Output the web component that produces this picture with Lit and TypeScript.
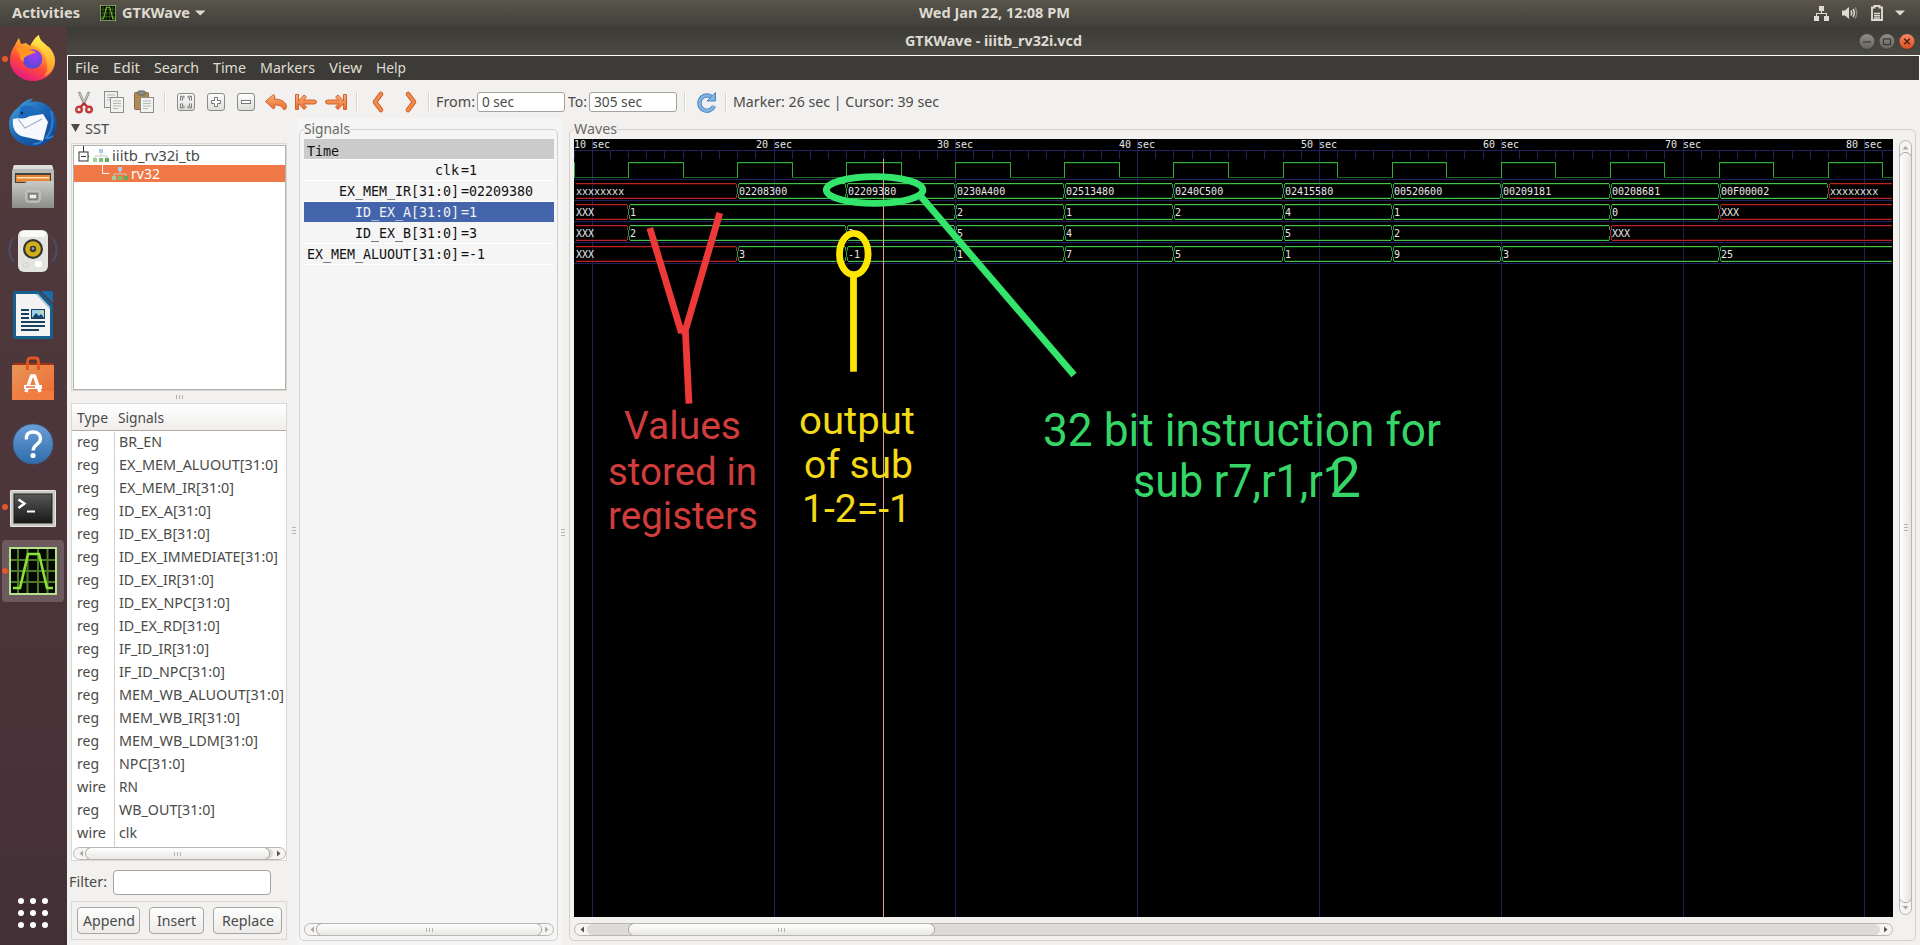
import { LitElement, html, svg, css } from "lit";
import { customElement } from "lit/decorators.js";
import { classMap } from "lit/directives/class-map.js";

/* A run of interface text with a known advance width. */
const label = (text: string, width: number, cls = "") => html`
  <svg class="label ${cls}" width=${width} height="20">
    <text x="0" y="15" textLength=${width} lengthAdjust="spacingAndGlyphs">${text}</text>
  </svg>`;

const labelStyles = css`
  .label { display: block; flex: none; overflow: visible; font: 14.3px "Noto Sans", "Open Sans", sans-serif; fill: #4a4a48; }
  .label.light { fill: #dfdbd2; }
  .label.bold { font-weight: 700; font-size: 14px; fill: #dfdbd2; }
  .label.white { fill: #fff; }
  .label.soft { fill: #6a6864; }
`;

/* ---------- launcher ---------- */
const gtkwaveGlyph = svg`
  <rect x="0" y="0" width="48" height="48" fill="#b5e08c"/>
  <rect x="2" y="2" width="44" height="44" fill="#050805"/>
  <path d="M9 2v44M18.500 2v44M29 2v44M38.500 2v44M2 13h44M2 24h44M2 35h44" stroke="#4c7a26" stroke-width="2"/>
  <path d="M4 41h7L19 7h11l8 34h6" fill="none" stroke="#8be234" stroke-width="2.600"/>`;

const dockIcons = [
  { run: true, art: svg`
    <defs>
      <linearGradient id="fa" x1=".8" y1="0" x2=".3" y2="1"><stop offset="0" stop-color="#fff44f"/><stop offset=".35" stop-color="#ffa229"/><stop offset=".65" stop-color="#ff4a3c"/><stop offset="1" stop-color="#e31587"/></linearGradient>
      <radialGradient id="fb" cx=".6" cy=".3" r=".8"><stop offset="0" stop-color="#a03cf5"/><stop offset="1" stop-color="#4a4bd0"/></radialGradient>
      <linearGradient id="fc" x1="0" y1="0" x2="0" y2="1"><stop offset="0" stop-color="#fff44f"/><stop offset="1" stop-color="#ff9a2a"/></linearGradient>
    </defs>
    <path d="M6 10C8 6 9 4 10 3l2 6 5-1 4 3c2-4 5-8 9-11 0 5 4 7 8 11l2 1c4 4 6 9 6 14 0 12-10 20-22 20S1 37 1 25c0-6 2-11 5-15z" fill="url(#fa)"/>
    <path d="M22 10c2-4 4-8 8-10 0 5 4 7 8 11s8 9 8 15c-1 10-7 14-11 15 4-5 4-9 2-17-2-7-8-13-15-14z" fill="url(#fc)" opacity=".85"/>
    <circle cx="23.500" cy="24" r="9.800" fill="url(#fb)"/>
    <path d="M7 13c6-2 9 0 12 2 4 0 7 1 8 3-4 0-6 2-9 3-2 1-4 2-3 6-4-2-5-5-4-8-1-2-3-3-4-6z" fill="#ff9422"/>` },
  { run: false, art: svg`
    <defs><linearGradient id="ta" x1="0" y1="0" x2="1" y2="1"><stop offset="0" stop-color="#45a7e6"/><stop offset=".5" stop-color="#1a63b4"/><stop offset="1" stop-color="#0f3f85"/></linearGradient></defs>
    <path d="M10 8C14 2 22-1 24 0l-3 3c10-2 18 2 22 8 6 8 6 20 1 27-5 7-14 10-20 9C11 47 0 38 0 25 0 17 5 11 10 8z" fill="url(#ta)"/>
    <path d="M4 20l30-5 5 8-5 19-22-5C6 34 3 29 4 20z" fill="#f6f8fb"/>
    <path d="M9 20l7 9 17-9" fill="none" stroke="#9fb1c8" stroke-width="1.200"/>
    <path d="M12 8c8-3 14 0 17 5l-8 3c-3 4-8 4-12 3z" fill="#1d6bbd"/><circle cx="13" cy="14" r="1.300" fill="#0b2550"/>
    <path d="M42 12c3 10 1 20-5 27 2 1 4 0 7-2M33 42c-2 2-5 3-9 3" fill="none" stroke="#2f7fd0" stroke-width="2"/>` },
  { run: false, art: svg`
    <defs><linearGradient id="na" x1="0" y1="0" x2="0" y2="1"><stop offset="0" stop-color="#c9c9c7"/><stop offset="1" stop-color="#8c8c89"/></linearGradient></defs>
    <path d="M5 2h38l2 6v36H3V8z" fill="#b9b9b6"/><path d="M5 2h38l1 4H4z" fill="#dededc"/>
    <rect x="6" y="10" width="36" height="10" fill="#453f3c"/><rect x="7" y="12" width="34" height="7" fill="#e48436"/><rect x="8" y="14" width="32" height="1.500" fill="#ffe2b0"/>
    <path d="M3 20h13l2-2h27v27H3z" fill="url(#na)"/>
    <rect x="17" y="28" width="14" height="11" rx="2" fill="#a6a6a3" stroke="#d3d3d0"/><rect x="20" y="31" width="8" height="5" fill="#eee" stroke="#555"/>` },
  { run: false, art: svg`
    <path d="M6 9Q-4 22 6 36M3 12q-6 10 0 22M42 9q10 13 0 27M45 12q6 10 0 22" fill="none" stroke="#4c5579" stroke-width="1.200" opacity=".7"/>
    <rect x="9" y="3" width="30" height="42" rx="6" fill="#e3e3e0"/><rect x="11" y="4" width="26" height="6" rx="3" fill="#fafafa"/>
    <circle cx="24" cy="22" r="10" fill="#343434"/><circle cx="24" cy="22" r="7.800" fill="#d2ae18"/><circle cx="24" cy="22" r="3.200" fill="#3b3b3b"/><circle cx="24" cy="21.500" r="1.300" fill="#aaa"/>
    <rect x="26" y="34" width="7" height="6" rx="2.500" fill="#fff"/><rect x="14" y="36" width="5" height="4" rx="1" fill="none" stroke="#d2d2cf"/>` },
  { run: false, art: svg`
    <path d="M6 0h24l14 14v32a2 2 0 0 1-2 2H6a2 2 0 0 1-2-2V2a2 2 0 0 1 2-2z" fill="#15608f"/><path d="M32 0h10a2 2 0 0 1 2 2v10z" fill="#1a6ca8"/>
    <path d="M7 3h20l14 15v27H7z" fill="#f3f3f3"/><path d="M28 3l13 14" stroke="#b8cbd8" stroke-width="1.500"/>
    <path d="M12 19h8M12 23h8M12 27h8M12 31h24M12 35h24M12 39h18" stroke="#17435f" stroke-width="2"/>
    <rect x="22.500" y="18.500" width="13" height="9" fill="#9cd0ef" stroke="#17435f"/><path d="M23 27l4-5 3 3 2-2 3 4z" fill="#17435f"/><circle cx="33" cy="21" r="1.500" fill="#efdb5a"/>` },
  { run: false, art: svg`
    <defs><linearGradient id="sa" x1="0" y1="0" x2="1" y2="1"><stop offset="0" stop-color="#e8965a"/><stop offset="1" stop-color="#ee6a30"/></linearGradient></defs>
    <path d="M4 8h40v4H4z" fill="#9c3512"/><rect x="3" y="10" width="42" height="35" fill="url(#sa)"/><rect x="3" y="36" width="42" height="9" fill="#f37f45" opacity=".8"/>
    <path d="M18.500 15V7q0-4 3-4h5q3 0 3 4v8" fill="none" stroke="#e2561f" stroke-width="2.800"/>
    <path d="M17 37l5.500-16h3L31 37" fill="none" stroke="#fff" stroke-width="3.400"/><path d="M15 32h18" stroke="#fff" stroke-width="4"/><path d="M17 32h9" stroke="#ef7a3f" stroke-width="1.600"/>` },
  { run: false, art: svg`
    <defs><linearGradient id="ha" x1="0" y1="0" x2="0" y2="1"><stop offset="0" stop-color="#6ba0d8"/><stop offset="1" stop-color="#2d6cab"/></linearGradient></defs>
    <circle cx="24" cy="25" r="20" fill="url(#ha)" stroke="#3a5f8c" stroke-width=".8"/>
    <path d="M17.500 20.500c-1-6 3-7.500 6.500-7.500 5 0 7.500 3 7.500 6.500 0 6-7.300 5.500-7.300 12" fill="none" stroke="#fff" stroke-width="3.400"/><circle cx="24" cy="36.500" r="2.600" fill="#fff"/>` },
  { run: true, art: svg`
    <defs><linearGradient id="ra" x1="0" y1="0" x2="0" y2="1"><stop offset="0" stop-color="#585858"/><stop offset="1" stop-color="#181818"/></linearGradient></defs>
    <rect x="1" y="7" width="46" height="37" rx="1.500" fill="#c9c9c6"/><rect x="1.500" y="7.500" width="45" height="36" rx="1" fill="none" stroke="#e8e8e6"/>
    <rect x="5" y="11" width="38" height="29" fill="url(#ra)" stroke="#222"/>
    <path d="M9.500 16.500l6 4-6 4.500" fill="none" stroke="#fff" stroke-width="2.400"/><path d="M18 28.500h8" stroke="#fff" stroke-width="2"/>` },
  { run: true, active: true, art: gtkwaveGlyph },
];

@customElement("app-dock")
class AppDock extends LitElement {
  static styles = css`
    :host { display: flex; flex-direction: column; box-sizing: border-box; padding: 1px 3px 0 0; background: linear-gradient(#523a3b, #4c363b 50%, #433036); }
    .slot { height: 62px; margin: 0 0 2px 2px; width: 62px; display: flex; align-items: center; border-radius: 4px; }
    .slot.active { background: #6c5a5e; }
    .pip { width: 6px; height: 6px; border-radius: 3px; margin-right: 1px; }
    .pip.on { background: #e4572c; }
    .slot svg { display: block; overflow: visible; }
    .apps { display: grid; grid-template-columns: repeat(3, 6px); gap: 6px; margin: auto 0 17px 18px; }
    .apps i { width: 6px; height: 6px; border-radius: 3px; background: #fff; }
  `;
  render() {
    return html`
      ${dockIcons.map((d) => html`
        <div class=${classMap({ slot: true, active: !!(d as any).active })}>
          <div class=${classMap({ pip: true, on: d.run })}></div>
          <svg width="48" height="48" viewBox="0 0 48 48">${d.art}</svg>
        </div>`)}
      <div class="apps">${Array.from({ length: 9 }, () => html`<i></i>`)}</div>`;
  }
}

/* ---------- waveform canvas ---------- */
type Change = [number, string, boolean?];
const START = 8.950;
const px = (t: number) => (t <= START ? 574 : Math.min(1893, Math.floor(592.2 + (t - 10) * 18.180)));

const buses: Change[][] = [
  [[START, "xxxxxxxx", true], [18, "02208300"], [24, "02209380"], [30, "0230A400"], [36, "02513480"], [42, "0240C500"], [48, "02415580"], [54, "00520600"], [60, "00209181"], [66, "00208681"], [72, "00F00002"], [78, "xxxxxxxx", true]],
  [[START, "XXX", true], [12, "1"], [30, "2"], [36, "1"], [42, "2"], [48, "4"], [54, "1"], [66, "0"], [72, "XXX", true]],
  [[START, "XXX", true], [12, "2"], [24, "3"], [30, "5"], [36, "4"], [48, "5"], [54, "2"], [66, "XXX", true]],
  [[START, "XXX", true], [18, "3"], [24, "-1"], [30, "1"], [36, "7"], [42, "5"], [48, "1"], [54, "9"], [60, "3"], [72, "25"]],
];

@customElement("wave-view")
class WaveView extends LitElement {
  static styles = css`
    :host { display: block; background: #000; }
    svg { display: block; }
    .crisp { shape-rendering: crispEdges; fill: none; stroke-width: 1; }
    .grid { stroke: #20205f; }
    .hi { stroke: #35a83c; }
    .lo { stroke: #1c6a22; }
    .bus { stroke: #4cbf52; }
    .side { stroke: #2f9a38; }
    .bad { stroke: #b52626; }
    .glow { stroke: #002c00; }
    .badglow { stroke: #3c0000; }
    .mark { stroke: #e79a8c; }
    .txt { font: 10px "DejaVu Sans Mono", monospace; fill: #e8e8e8; }
    .note { font-family: Roboto, sans-serif; }
    .red { fill: #cf3c3b; }
    .yellow { fill: #f2da18; }
    .green { fill: #35d568; }
    .pen { fill: none; stroke-width: 6.800; }
    .pen.r { stroke: #ee3939; }
    .pen.y { stroke: #ffe600; }
    .pen.g { stroke: #33e56b; }
  `;

  private clock() {
    const out = [svg`<path class="crisp hi" d="M574.500 162V178"/>`];
    for (let t = 9; t < 82; t += 6) {
      const a = t === 9 ? 574 : px(t), b = px(t + 3), c = px(t + 6);
      out.push(svg`<path class="crisp lo" d="M${a} 177.500H${b}"/>`);
      if (t + 3 < 81) out.push(svg`
        <path class="crisp glow" d="M${b} 163.500H${c}"/>
        <path class="crisp hi" d="M${b + 0.500} 178V162.500H${c + 0.500}V178"/>`);
    }
    return out;
  }

  private bus(row: Change[], index: number) {
    const y = 183 + index * 21;
    return row.map(([t, value, bad], i) => {
      const a = px(t), last = i === row.length - 1;
      const b = last ? 1892 : px(row[i + 1][0]);
      const left = a + 1;
      const right = last ? b : b - 1;
      return svg`
        <path class="crisp ${bad ? "badglow" : "glow"}" d="M${left + 1} ${y + 1.500}H${right}M${left + 1} ${y + 14.500}H${right}"/>
        <path class="crisp ${bad ? "bad" : "bus"}" d="M${left + 1} ${y + 0.500}H${right}M${left + 1} ${y + 15.500}H${right}"/>
        ${i ? svg`<path class="crisp ${bad ? "bad" : "side"}" d="M${a + 1.500} ${y + 1}V${y + 5}M${a + 1.500} ${y + 11}V${y + 15}M${a + 0.500} ${y + 5}V${y + 11}"/>` : ""}
        ${last ? "" : svg`<path class="crisp ${bad ? "bad" : "side"}" d="M${b - 0.500} ${y + 1}V${y + 5}M${b - 0.500} ${y + 11}V${y + 15}M${b + 0.500} ${y + 5}V${y + 11}"/>`}
        <text class="txt" x=${a + 2} y=${y + 12}>${value}</text>`;
    });
  }

  private note(text: string, x: number, y: number, width: number, size: number, tone: string) {
    return svg`<text class="note ${tone}" x=${x} y=${y} font-size=${size} textLength=${width} lengthAdjust="spacingAndGlyphs">${text}</text>`;
  }

  render() {
    const secs = Array.from({ length: 73 }, (_, i) => i + 9);
    return html`
      <svg width="1319" height="778" viewBox="574 139 1319 778">
        <path class="crisp grid" d="M574 150.500H1893M574 179.500H1893M574 200.500H1893M574 221.500H1893M574 242.500H1893M574 263.500H1893"/>
        ${secs.map((t) => svg`<path class="crisp grid" d="M${px(t) + 0.500} ${t % 10 ? "150V159" : "139V917"}"/>`)}
        ${[10, 20, 30, 40, 50, 60, 70, 80].map((t) => svg`<text class="txt" x=${px(t) - 18} y="148">${t} sec</text>`)}
        ${this.clock()}
        ${buses.map((b, i) => this.bus(b, i))}
        <path class="crisp mark" d="M883.500 159V917"/>
        <ellipse class="pen g" cx="874.600" cy="190" rx="48.300" ry="13.400"/>
        <path class="pen g" d="M920.500 196L1074 375"/>
        <ellipse class="pen y" cx="853.800" cy="254" rx="14.300" ry="20.600"/>
        <path class="pen y" d="M853.500 275V371.700"/>
        <path class="pen r" d="M649.800 228L681.500 333M719.800 213L684 335M685.400 331L689 403.700"/>
        ${this.note("Values", 624, 439.200, 117, 39, "red")}
        ${this.note("stored in", 608, 484.500, 149, 39, "red")}
        ${this.note("registers", 608, 528.500, 150, 39, "red")}
        ${this.note("output", 799, 434.200, 116, 39, "yellow")}
        ${this.note("of sub", 804, 478.200, 109, 39, "yellow")}
        ${this.note("1-2=-1", 802, 522.200, 109, 39, "yellow")}
        ${this.note("32 bit instruction for", 1043, 445.500, 398, 45.500, "green")}
        ${this.note("sub r7,r1,r1", 1133, 497.200, 214, 45.500, "green")}
        ${this.note("2", 1329, 497.200, 32, 55, "green")}
      </svg>`;
  }
}

/* ---------- main window ---------- */
const tools: Record<string, unknown> = {
  cut: svg`<path d="M7 2l6 13M17 2l-6 13" stroke="#8d8d8a" stroke-width="2.600"/><path d="M7.500 3l5.500 11M16.500 3l-5.500 11" stroke="#d8d8d5" stroke-width="1"/><circle cx="7" cy="19.500" r="2.800" fill="none" stroke="#c03a3a" stroke-width="2.400"/><circle cx="17" cy="19.500" r="2.800" fill="none" stroke="#c03a3a" stroke-width="2.400"/><path d="M9 16.500l3-3 3 3" fill="none" stroke="#b43030" stroke-width="2.400"/>`,
  copy: svg`<rect x="2.500" y="1.500" width="13" height="16" fill="#eee" stroke="#8d8d8a"/><path d="M5 5h8M5 7.500h8M5 10h6" stroke="#b5b5b2"/><rect x="8.500" y="7.500" width="13" height="15" fill="#f2f2f1" stroke="#8d8d8a"/><path d="M11 11h8M11 13.500h8M11 16h8M11 18.500h5" stroke="#b5b5b2"/>`,
  paste: svg`<rect x="2.500" y="2.500" width="14" height="17" rx="1" fill="#b08a55" stroke="#8a6a3c"/><rect x="6" y="1" width="7" height="4" rx="1" fill="#8d8d8a" stroke="#666"/><rect x="8.500" y="7.500" width="13" height="15" fill="#f2f2f1" stroke="#8d8d8a"/><path d="M11 11h8M11 13.500h8M11 16h8M11 18.500h5" stroke="#b5b5b2"/>`,
  fit: svg`<rect x="3.500" y="3.500" width="17" height="17" rx="2.500" fill="url(#box)" stroke="#8a8a87"/><path d="M10.500 7H7.500v3.500M13.500 7h3v3.500M10.500 17H7.500v-3.500M13.500 17h3v-3.500" fill="none" stroke="#666" stroke-width="2.600"/><path d="M10.500 7H7.500v3.500M13.500 7h3v3.500M10.500 17H7.500v-3.500M13.500 17h3v-3.500" fill="none" stroke="#fff" stroke-width=".8"/>`,
  plus: svg`<rect x="3.500" y="3.500" width="17" height="17" rx="2.500" fill="url(#box)" stroke="#8a8a87"/><path d="M10.500 7.500h3v3h3v3h-3v3h-3v-3h-3v-3h3z" fill="#fff" stroke="#777"/>`,
  minus: svg`<rect x="3.500" y="3.500" width="17" height="17" rx="2.500" fill="url(#box)" stroke="#8a8a87"/><rect x="7.500" y="10.500" width="9" height="3" fill="#fff" stroke="#777"/>`,
  undo: svg`<path d="M1.500 11.500L9.500 4.500l1.500 1.500-1 3c7 0 11 2.500 12.300 6.500.7 2.500-.8 4.500-2.800 4-1.500-3.500-4-4.500-9.500-4.500l1 2.500L9.500 19z" fill="url(#org)" stroke="#d2602a" stroke-linejoin="round"/>`,
  first: svg`<path d="M1.500 4.500h3v6.500L10 5l2.500 2-3 3H20q2.500 0 2.500 2t-2.500 2H9.500l3 3L10 19.500 4.500 13.500v6h-3z" fill="url(#org)" stroke="#d2602a" stroke-linejoin="round"/>`,
  last: svg`<path d="M22.500 4.500h-3v6.500L14 5l-2.500 2 3 3H4q-2.500 0-2.500 2t2.500 2h10.500l-3 3 2.500 2.500 5.500-6v6h3z" fill="url(#org)" stroke="#d2602a" stroke-linejoin="round"/>`,
  left: svg`<path d="M15 4l-6 8 6 8" fill="none" stroke="#d2602a" stroke-width="4.600" stroke-linecap="round" stroke-linejoin="round"/><path d="M15 4l-6 8 6 8" fill="none" stroke="#f08c4c" stroke-width="2.800" stroke-linecap="round" stroke-linejoin="round"/>`,
  right: svg`<path d="M9 4l6 8-6 8" fill="none" stroke="#d2602a" stroke-width="4.600" stroke-linecap="round" stroke-linejoin="round"/><path d="M9 4l6 8-6 8" fill="none" stroke="#f08c4c" stroke-width="2.800" stroke-linecap="round" stroke-linejoin="round"/>`,
  reload: svg`<path d="M17.500 7A7.600 7.600 0 1 0 20 16" fill="none" stroke="#4f86c0" stroke-width="4.400"/><path d="M17.500 7A7.600 7.600 0 1 0 20 16" fill="none" stroke="#85b3e0" stroke-width="2.400"/><path d="M21.500 2.500v8.500h-8.500l3-3 2.500-2.500z" fill="#85b3e0" stroke="#4f86c0"/>`,
};
const defs = svg`<defs>
  <linearGradient id="box" x1="0" y1="0" x2="0" y2="1"><stop offset="0" stop-color="#fff"/><stop offset="1" stop-color="#dcdcda"/></linearGradient>
  <linearGradient id="org" x1="0" y1="0" x2="0" y2="1"><stop offset="0" stop-color="#f9b27c"/><stop offset="1" stop-color="#ea6c2c"/></linearGradient></defs>`;
const tool = (name: string, cls = "") => html`<div class="tool ${cls}"><svg width="24" height="24">${defs}${tools[name]}</svg></div>`;

const treeGlyph = html`<svg class="tree-glyph" width="16" height="14"><path d="M8 4v3M2 9V7h12v2" fill="none" stroke="#c3cac3" stroke-width="1"/><rect x="6" y="0" width="4" height="4" fill="#a9cdf2"/><rect x="0" y="9" width="4" height="4" fill="#9fce98"/><rect x="6" y="9" width="4" height="4" fill="#7cbf73"/><rect x="12" y="9" width="4" height="4" fill="#5fae55"/></svg>`;

const menu: [string, number][] = [["File", 24], ["Edit", 27], ["Search", 45], ["Time", 33], ["Markers", 55], ["View", 33], ["Help", 30]];

const signals: [string, string, number][] = [
  ["reg", "BR_EN", 43], ["reg", "EX_MEM_ALUOUT[31:0]", 159], ["reg", "EX_MEM_IR[31:0]", 115], ["reg", "ID_EX_A[31:0]", 92],
  ["reg", "ID_EX_B[31:0]", 91], ["reg", "ID_EX_IMMEDIATE[31:0]", 159], ["reg", "ID_EX_IR[31:0]", 95], ["reg", "ID_EX_NPC[31:0]", 111],
  ["reg", "ID_EX_RD[31:0]", 101], ["reg", "IF_ID_IR[31:0]", 90], ["reg", "IF_ID_NPC[31:0]", 106], ["reg", "MEM_WB_ALUOUT[31:0]", 165],
  ["reg", "MEM_WB_IR[31:0]", 121], ["reg", "MEM_WB_LDM[31:0]", 139], ["reg", "NPC[31:0]", 66], ["wire", "RN", 19],
  ["reg", "WB_OUT[31:0]", 96], ["wire", "clk", 18],
];

const traces: [string, string, boolean?][] = [
  ["clk", "1"], ["EX_MEM_IR[31:0]", "02209380"], ["ID_EX_A[31:0]", "1", true], ["ID_EX_B[31:0]", "3"], ["EX_MEM_ALUOUT[31:0]", "-1"],
];

const hbar = (cls: string, offLeft = false, offRight = false) => html`
  <div class="hbar ${cls}">
    <svg width="13" height="11"><path d="M9 2.500v6L5.500 5.500z" fill=${offLeft ? "#a9a8a5" : "#55534f"}/></svg>
    <div class="trough"><div class="thumb"><i></i><i></i><i></i></div></div>
    <svg width="13" height="11"><path d="M5 2.500v6L8.500 5.500z" fill=${offRight ? "#a9a8a5" : "#55534f"}/></svg>
  </div>`;

@customElement("app-root")
class AppRoot extends LitElement {
  static styles = [labelStyles, css`
    :host { display: grid; width: 1920px; height: 945px; overflow: hidden; grid-template: 27px 918px / 67px 1853px; background: #f2f1ef; }
    svg { display: block; flex: none; }
    .topbar { grid-column: 1 / 3; display: grid; grid-template-columns: 1fr auto 1fr; align-items: center; background: linear-gradient(#59554b, #403f3a); padding-bottom: 1px; }
    .topbar > div { display: flex; align-items: center; }
    .top-left { padding-left: 12px; }
    .top-left .app { margin: 0 6px 0 20px; }
    .top-left .caret { margin-left: 5px; }
    .top-mid { padding-left: 68px; width: 151px; }
    .top-right { justify-content: flex-end; padding-right: 15px; gap: 13px; }
    .top-right .battery { margin-right: -1px; }
    .window { display: grid; grid-template-rows: 28px 25px 38px 827px; min-width: 0; }
    .title { display: flex; align-items: center; background: linear-gradient(#3b3a35, #4a4943); padding: 0 5px 0 838px; }
    .buttons { display: flex; gap: 4px; margin-left: auto; }
    .menubar { display: flex; align-items: center; gap: 14px; padding-left: 7px; background: #3c3b37; border: 1px solid #fbfbfa; border-bottom: 0; }
    .toolbar { display: flex; align-items: center; padding: 5px 0 0 2px; }
    .tool { width: 30px; display: flex; justify-content: center; }
    .tool.wide { width: 33px; }
    .sep { width: 1px; height: 19px; background: #d5d3d0; border-right: 1px solid #fff; }
    .s1 { margin: 0 5px 0 5px; }
    .s2 { margin: 0 3px 0 5px; }
    .s3 { margin: 0 6px 0 1px; }
    .s4 { margin: 0 5px 0 7px; }
    .s5 { margin: 0 6px 0 4px; }
    .s4 + .tool { width: 30px; }
    .entry { box-sizing: border-box; height: 20px; border: 1px solid #a5a29d; border-radius: 3px; background: #fff; display: flex; align-items: center; padding-left: 4px; }
    .entry.from { width: 88px; margin: 0 3px 0 2px; }
    .entry.to { width: 88px; margin-left: 2px; }
    .body { display: grid; grid-template-columns: 230px 264px 1359px; }
    .left { display: grid; grid-template-rows: 25px 248px 12px 458px 40px 39px; grid-template-columns: 225px 5px; }
    .left > * { grid-column: 1; }
    .sst { display: flex; align-items: center; gap: 5px; padding: 0 0 4px 4px; }
    .box { margin-left: 4px; width: 216px; box-sizing: border-box; border: 1px solid #dad8d4; background: #fff; }
    .tree { background: #f2f1ef; padding: 1px 0 0 1px; }
    .tree-in { box-sizing: border-box; height: 100%; border: 1px solid #b3b0ac; background: #fff; }
    .row1 { display: flex; align-items: center; height: 19px; padding-left: 4px; }
    .row1 .tree-glyph { margin: 0 3px 0 4px; }
    .row2 { display: flex; align-items: center; height: 17px; padding-left: 28px; background: #f07746; }
    .row2 .tree-glyph { margin: 0 3px 0 2px; }
    .grip { display: flex; justify-content: center; align-items: center; gap: 2px; }
    .grip i, .thumb i { width: 1px; height: 4px; background: #b4b2ae; }
    .vgrip { grid-column: 2 !important; grid-row: 1 / 7; display: flex; flex-direction: column; justify-content: center; gap: 2px; align-items: flex-start; padding-top: 2px; }
    .vgrip i { width: 4px; height: 1px; background: #bbb9b5; }
    .list { display: grid; grid-template-rows: 26px 416px 13px; padding: 1px 0 0; }
    .head { display: flex; align-items: center; background: linear-gradient(#fff, #efeeec); border-bottom: 1px solid #b0ada9; padding: 1px 0 0 5px; box-sizing: border-box; }
    .head .label + .label { margin-left: 10px; }
    .rows { background: linear-gradient(90deg, transparent 42px, #d2d0cd 42px, #d2d0cd 43px, transparent 43px); margin-top: -1px; }
    .sig { display: grid; grid-template-columns: 42px 1fr; height: 23px; align-items: center; padding-left: 5px; }
    .hbar { display: grid; grid-template-columns: 13px 1fr 13px; box-sizing: border-box; height: 13px; border: 1px solid #b9b6b2; border-radius: 7px; background: #f6f5f4; overflow: hidden; }
    .trough { background: #dcdbd8; margin: 0 -1px; border-radius: 6px; display: flex; }
    .thumb { display: flex; justify-content: center; align-items: center; gap: 2px; box-sizing: border-box; background: linear-gradient(#fefefe, #e9e8e6); border-radius: 7px; box-shadow: 0 0 0 1px #a3a09c; }
    .hbar.a { margin: 0 0 0 1px; }
    .hbar.a .thumb { width: 183px; }
    .hbar.b { width: 250px; margin-top: 6px; }
    .hbar.b .thumb { width: 100%; }
    .hbar.c { width: 1319px; margin-top: 6px; }
    .hbar.c .thumb { width: 305px; margin-left: 42px; }
    .filter { display: flex; align-items: center; padding: 2px 0 0 2px; gap: 6px; }
    .field { box-sizing: border-box; width: 158px; height: 25px; border: 1px solid #a5a29d; border-radius: 4px; background: #fff; }
    .actions { background: none; display: flex; align-items: center; gap: 9px; padding-left: 5px; }
    .btn { box-sizing: border-box; height: 27px; border: 1px solid #a9a6a2; border-radius: 4px; background: linear-gradient(#fdfdfd, #ecebe9); display: flex; align-items: center; justify-content: center; }
    .btn.w1 { width: 63px; }
    .btn.w2 { width: 55px; }
    .btn.w3 { width: 69px; }
    fieldset { box-sizing: border-box; margin: 1px 0 0; height: 822px; min-width: 0; border: 1px solid #d3d1ce; border-radius: 5px; }
    legend { padding: 0; height: 20px; }
    .panel { background: #f5f5f5; }
    .panel fieldset { width: 259px; margin-left: 2px; padding: 0 3px 0 4px; }
    .names { height: 778px; font: 13.330px/20px "DejaVu Sans Mono", monospace; color: #111; letter-spacing: -0.020px; }
    .time { height: 17px; background: #cbcbcb; padding: 3px 0 0 3px; line-height: 20px; border-bottom: 1px solid #fff; }
    .trace { display: grid; grid-template-columns: 155px 1fr; gap: 2px; height: 20px; border-bottom: 1px solid #fff; line-height: 21px; white-space: pre; text-align: right; }
    .trace span + span { text-align: left; }
    .trace.on { background: #4464ac; color: #f2f2f5; border-color: #f5f5f5; }
    .waves { display: grid; grid-template-columns: 8px 1347px; }
    .waves > .vgrip { grid-column: 1 !important; grid-row: 1; }
    .waves fieldset { padding: 0 3px 0 4px; }
    .canvas { display: grid; grid-template: 778px 19px / 1319px 13px; column-gap: 6px; }
    .vbar { box-sizing: border-box; height: 775px; margin-top: 1px; border: 1px solid #b9b6b2; border-radius: 7px; background: #f6f5f4; display: grid; grid-template-rows: 12px 1fr 12px; overflow: hidden; }
    .vthumb { display: flex; flex-direction: column; justify-content: center; align-items: center; gap: 2px; background: linear-gradient(90deg, #fefefe, #e6e5e3); border-radius: 6px; box-shadow: 0 0 0 1px #a3a09c; }
    .vthumb i { width: 4px; height: 1px; background: #b4b2ae; }
  `];

  private winButton(glyph: unknown, hot = false) {
    const id = hot ? "btn-hot" : "btn-plain";
    return html`<svg width="16" height="17"><defs>
      <linearGradient id=${id} x1="0" y1="0" x2="0" y2="1"><stop offset="0" stop-color=${hot ? "#f58a66" : "#908e87"}/><stop offset="1" stop-color=${hot ? "#dc4c1e" : "#65635c"}/></linearGradient></defs>
      <circle cx="8" cy="8.500" r="7.800" fill="url(#${id})" stroke="#33322e" stroke-width=".5"/>${glyph}</svg>`;
  }

  render() {
    return html`
      <div class="topbar">
        <div class="top-left">
          ${label("Activities", 68, "bold")}
          <svg class="app" width="16" height="16" viewBox="0 0 48 48">${gtkwaveGlyph}</svg>
          ${label("GTKWave", 68, "bold")}
          <svg class="caret" width="11" height="6"><path d="M0 .500h10.500L5.200 5.500z" fill="#dfdbd2"/></svg>
        </div>
        <div class="top-mid">${label("Wed Jan 22, 12:08 PM", 151, "bold")}</div>
        <div class="top-right">
          <svg width="15" height="16" fill="#dfdbd2"><rect x="5" y="1" width="5" height="5"/><rect x="0" y="11" width="5" height="5"/><rect x="10" y="11" width="5" height="5"/><path d="M7 6h1v2h5v3h-1V9H3v2H2V8h5z"/></svg>
          <svg width="16" height="14"><path d="M0 4.500h3L7 1v12L3 9.500H0z" fill="#dfdbd2"/><path d="M9 4.500q1.500 2.500 0 5M11 3q2.600 4 0 8" fill="none" stroke="#dfdbd2" stroke-width="1.500"/><path d="M13 1.500q3.500 5.500 0 11" fill="none" stroke="#8a877f" stroke-width="1.400"/></svg>
          <svg class="battery" width="12" height="16"><path d="M3.500 2.500V1h5v1.500H11V15H1V2.500z" fill="none" stroke="#dfdbd2" stroke-width="1.900"/><path d="M3 8.500h6M3 10.700h6M3 13h6" stroke="#dfdbd2" stroke-width="1.400"/></svg>
          <svg width="10" height="6"><path d="M0 .500h10L5 5.500z" fill="#dfdbd2"/></svg>
        </div>
      </div>
      <app-dock></app-dock>
      <div class="window">
        <div class="title">
          ${label("GTKWave - iiitb_rv32i.vcd", 177, "bold")}
          <div class="buttons">
            ${this.winButton(svg`<path d="M4 9h8" stroke="#3c3b37" stroke-width="1.200"/>`)}
            ${this.winButton(svg`<rect x="4.500" y="6" width="7" height="5.500" fill="none" stroke="#3c3b37" stroke-width="1.200"/>`)}
            ${this.winButton(svg`<path d="M5.200 5.700l5.600 5.600M10.800 5.700l-5.600 5.600" stroke="#4a1c0c" stroke-width="1.400"/>`, true)}
          </div>
        </div>
        <div class="menubar">${menu.map(([m, w]) => label(m, w, "light"))}</div>
        <div class="toolbar">
          ${tool("cut")}${tool("copy")}${tool("paste")}
          <div class="sep s1"></div>
          ${["fit", "plus", "minus", "undo", "first", "last"].map((n) => tool(n))}
          <div class="sep s2"></div>
          ${tool("left", "wide")}${tool("right", "wide")}
          <div class="sep s3"></div>
          ${label("From:", 39)}<div class="entry from">${label("0 sec", 32)}</div>
          ${label("To:", 19)}<div class="entry to">${label("305 sec", 48)}</div>
          <div class="sep s4"></div>
          ${tool("reload")}
          <div class="sep s5"></div>
          ${label("Marker: 26 sec  |  Cursor: 39 sec", 206)}
        </div>
        <div class="body">
          <div class="left">
            <div class="sst"><svg width="9" height="12"><path d="M0 1h9L4.500 9z" fill="#4a4a48"/></svg>${label("SST", 24)}</div>
            <div class="box tree"><div class="tree-in">
              <div class="row1">
                <svg width="11" height="20"><path d="M5.500 0v6M10 10.500h1.500" stroke="#333"/><rect x="1" y="6" width="9" height="9" fill="#fff" stroke="#333"/><path d="M3 10.500h5" stroke="#333"/></svg>
                ${treeGlyph}${label("iiitb_rv32i_tb", 88)}
              </div>
              <div class="row2"><svg width="8" height="17"><path d="M.500 0v8.500H7" fill="none" stroke="#fff"/></svg>${treeGlyph}${label("rv32", 29, "white")}</div>
            </div></div>
            <div class="grip"><i></i><i></i><i></i></div>
            <div class="box list">
              <div class="head">${label("Type", 31)}${label("Signals", 46)}</div>
              <div class="rows">${signals.map(([k, n, w]) => html`<div class="sig">${label(k, k === "reg" ? 22 : 29)}${label(n, w)}</div>`)}</div>
              ${hbar("a", true)}
            </div>
            <div class="filter">${label("Filter:", 38)}<div class="field"></div></div>
            <div class="box actions">
              <div class="btn w1">${label("Append", 52)}</div>
              <div class="btn w2">${label("Insert", 39)}</div>
              <div class="btn w3">${label("Replace", 52)}</div>
            </div>
            <div class="vgrip"><i></i><i></i><i></i></div>
          </div>
          <div class="panel">
            <fieldset><legend>${label("Signals", 46, "soft")}</legend>
              <div class="names">
                <div class="time">Time</div>
                ${traces.map(([n, v, on]) => html`<div class=${classMap({ trace: true, on: !!on })}><span>${n}</span><span>=${v}</span></div>`)}
              </div>
              ${hbar("b", true, true)}
            </fieldset>
          </div>
          <div class="waves">
            <div class="vgrip"><i></i><i></i><i></i></div>
            <fieldset><legend>${label("Waves", 43, "soft")}</legend>
              <div class="canvas">
                <wave-view></wave-view>
                <div class="vbar">
                  <svg width="11" height="12"><path d="M2.500 8.500h6L5.500 5z" fill="#a9a8a5"/></svg>
                  <div class="vthumb"><i></i><i></i><i></i></div>
                  <svg width="11" height="12"><path d="M2.500 4h6L5.500 7.500z" fill="#a9a8a5"/></svg>
                </div>
                ${hbar("c")}
              </div>
            </fieldset>
          </div>
        </div>
      </div>`;
  }
}
